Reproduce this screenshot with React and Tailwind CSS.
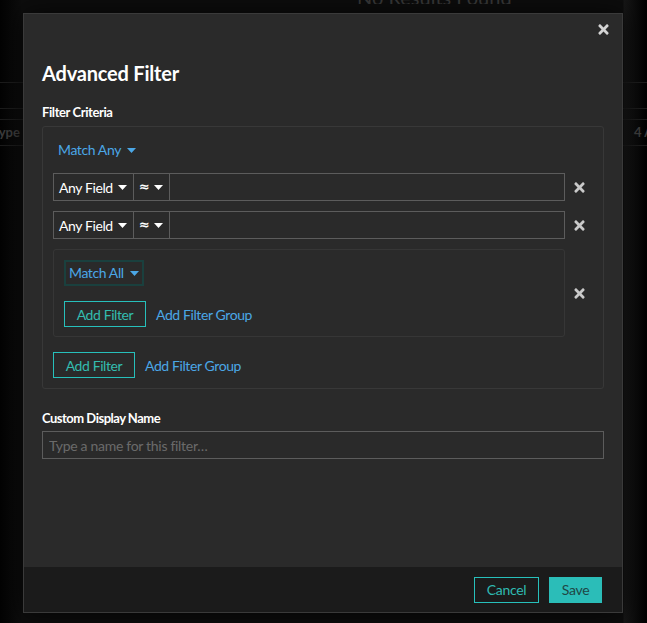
import React from 'react'
import { FaTimes } from 'react-icons/fa'

function Caret({ className = '' }) {
    return (
        <svg width="9" height="5" viewBox="0 0 9 5" className={className}>
            <path d="M0 0h9L4.5 5z" fill="currentColor" />
        </svg>
    )
}

function RemoveBtn() {
    return (
        <button className="flex w-[28px] shrink-0 items-center justify-center text-[#c9c9c9]">
            <FaTimes size={15} />
        </button>
    )
}

function MatchSelect({ label, focused }) {
    return (
        <button className={`flex h-[26px] items-center gap-[6px] self-start border-2 px-[3px] pb-[1px] text-[14px] tracking-[-0.4px] text-[#4ba7e6] ${focused ? 'border-[#1a403e]' : 'border-transparent'}`}>
            {label}
            <Caret className="mt-[1px]" />
        </button>
    )
}

function FilterRow() {
    return (
        <div className="flex items-center">
            <div className="flex h-7 flex-1 text-[14px] tracking-[-0.4px] text-white">
                <div className="flex w-[81px] items-center justify-between border border-[#5c5c5c] pl-[5px] pr-[6px]">
                    Any Field
                    <Caret />
                </div>
                <div className="-ml-px flex w-[37px] items-center justify-between border border-[#5c5c5c] pl-[5px] pr-[6px]">
                    <span className="font-['DejaVu_Sans',sans-serif] text-[13px] font-bold">≈</span>
                    <Caret />
                </div>
                <div className="-ml-px flex-1 border border-[#5c5c5c]"></div>
            </div>
            <RemoveBtn />
        </div>
    )
}

function Actions() {
    return (
        <div className="flex items-center gap-[10px] text-[14px] tracking-[-0.4px]">
            <button className="h-[26px] w-[82px] border border-[#27c0bb] text-[#33bcaf]">Add Filter</button>
            <button className="text-[#4ba7e6]">Add Filter Group</button>
        </div>
    )
}

export default function App() {
    return (
        <div className="relative h-[623px] w-full overflow-hidden bg-[linear-gradient(to_right,#030303,#0d0d0d_22px,#0d0d0d_623px,#171717_624px,#000)] font-[Lato,sans-serif]">
            {/* page behind the dialog */}
            <div className="-mt-[14px] h-[18px] overflow-hidden whitespace-nowrap pl-[357px] text-[20px] leading-[22px] text-[#3a3a3a]">No Results Found</div>
            <div className="mt-[78px] h-[27px] border-y border-[#1c1c1c]"></div>
            <div className="mt-[10px] flex h-[27px] items-center justify-between overflow-hidden whitespace-nowrap border-y border-[#1c1c1c] text-[13px] font-bold text-[#3d3d3d]">
                <span className="-ml-[8px]">Type</span>
                <span className="-mr-[44px]">4 Address</span>
            </div>

            {/* dialog */}
            <div className="absolute left-[23px] top-[13px] flex h-[600px] w-[600px] flex-col border border-[#3a3a3a] bg-[#2a2a2a] shadow-[0_0_24px_rgba(0,0,0,0.7)]">
                <button className="absolute right-[9px] top-[5px] flex h-5 w-5 items-center justify-center text-[#d4d4d4]">
                    <FaTimes size={15} />
                </button>
                <div className="flex flex-1 flex-col px-[18px] pt-[47px]">
                    <h1 className="text-[20px] font-bold leading-6 tracking-[-0.2px] text-white">Advanced Filter</h1>
                    <h2 className="mt-[19px] text-[13px] font-bold leading-4 tracking-[-0.4px] text-white">Filter Criteria</h2>
                    <div className="mt-[6px] flex flex-col rounded-[3px] border border-[#383838] p-[10px]">
                        <MatchSelect label="Match Any" />
                        <div className="mt-[10px] flex flex-col gap-[10px]">
                            <FilterRow />
                            <FilterRow />
                            <div className="flex items-center">
                                <div className="flex flex-1 flex-col rounded-[3px] border border-[#363636] px-[10px] pb-[9px] pt-[10px]">
                                    <MatchSelect label="Match All" focused />
                                    <div className="mt-[15px]">
                                        <Actions />
                                    </div>
                                </div>
                                <RemoveBtn />
                            </div>
                        </div>
                        <div className="mt-[15px]">
                            <Actions />
                        </div>
                    </div>
                    <h2 className="mt-[21px] text-[13px] font-bold leading-4 tracking-[-0.5px] text-white">Custom Display Name</h2>
                    <input
                        className="mt-[5px] h-7 border border-[#5c5c5c] bg-transparent px-[6px] text-[14px] tracking-[-0.3px] text-white outline-none placeholder:text-[#6a6a6a]"
                        placeholder="Type a name for this filter…"
                    />
                </div>
                <div className="flex h-[45px] items-start justify-end gap-[10px] bg-[#1b1b1b] pr-[20px] pt-[10px] text-[14px] tracking-[-0.3px]">
                    <button className="h-[26px] w-[65px] border border-[#27c0bb] pb-[2px] text-[#2fbab2]">Cancel</button>
                    <button className="h-[26px] w-[53px] bg-[#2bbdb8] pb-[2px] text-[#1f4745]">Save</button>
                </div>
            </div>
        </div>
    )
}
